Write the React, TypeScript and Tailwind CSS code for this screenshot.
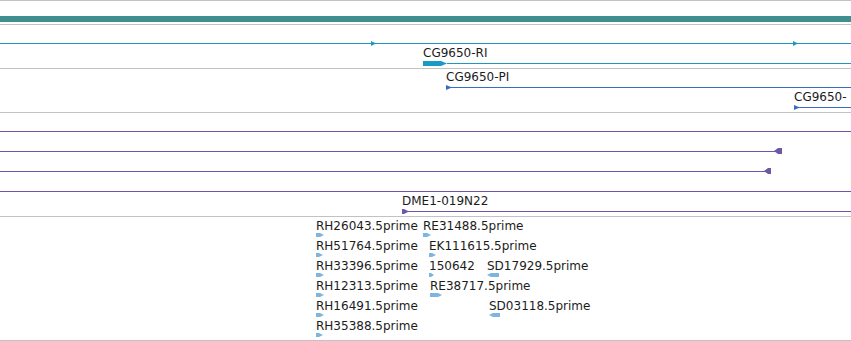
import type { ReactNode } from "react";

type Dir = "right" | "left";

// pennant arrowhead, flat back + pointed tip
function Glyph({ w, h, dir, fill, body = 0, mt = 0 }: { w: number; h: number; dir: Dir; fill: string; body?: number; mt?: number }) {
  const mid = h / 2;
  const pts =
    dir === "right"
      ? `0,0 ${body},0 ${w},${mid} ${body},${h} 0,${h}`
      : `${w},0 ${w - body},0 0,${mid} ${w - body},${h} ${w},${h}`;
  return (
    <svg style={{ marginTop: mt }} width={w} height={h} viewBox={`0 0 ${w} ${h}`} className="block shrink-0">
      <polygon points={pts} fill={fill} />
    </svg>
  );
}

// one feature at its genomic x: name on top, glyph under it
function Feature({ x, name, children }: { x: number; name?: string; children: ReactNode }) {
  return (
    <div className="absolute top-px flex flex-col items-start" style={{ left: x }}>
      <span className="h-[14px] whitespace-nowrap text-[12px] leading-[14px] text-[#1c1c1c] font-['DejaVu_Sans',sans-serif]">
        {name}
      </span>
      {children}
    </div>
  );
}

// connecting line of a feature, across the row at y 18
function Span({ from = 0, to, color }: { from?: number; to?: number; color: string }) {
  return (
    <div
      className={`absolute top-[18px] h-px ${color}`}
      style={to === undefined ? { left: from, right: 0 } : { left: from, width: to - from }}
    />
  );
}

const Row = ({ children }: { children?: ReactNode }) => <div className="relative h-5 shrink-0">{children}</div>;

const Sep = () => <div className="h-px shrink-0 bg-[#c2c2c2]" />;

const TEAL = "#1f98bf";
const BLUE = "#3a6cc6";
const PURPLE = "#6f57a6";
const EST = "#7db4e0";

const estRows: { x: number; name: string; w: number; dir: Dir }[][] = [
  [
    { x: 316, name: "RH26043.5prime", w: 8, dir: "right" },
    { x: 423, name: "RE31488.5prime", w: 8, dir: "right" },
  ],
  [
    { x: 316, name: "RH51764.5prime", w: 7, dir: "right" },
    { x: 429, name: "EK111615.5prime", w: 7, dir: "right" },
  ],
  [
    { x: 316, name: "RH33396.5prime", w: 8, dir: "right" },
    { x: 429, name: "150642", w: 5, dir: "right" },
    { x: 487, name: "SD17929.5prime", w: 12, dir: "left" },
  ],
  [
    { x: 316, name: "RH12313.5prime", w: 8, dir: "right" },
    { x: 430, name: "RE38717.5prime", w: 12, dir: "right" },
  ],
  [
    { x: 316, name: "RH16491.5prime", w: 8, dir: "right" },
    { x: 489, name: "SD03118.5prime", w: 11, dir: "left" },
  ],
  [{ x: 316, name: "RH35388.5prime", w: 7, dir: "right" }],
];

export default function App() {
  return (
    <div className="flex h-[341px] w-[851px] flex-col overflow-hidden bg-white">
      <Sep />
      <div className="flex h-[23px] flex-col justify-end pb-[2px]">
        <div className="h-[6px] bg-[#418e90]" />
      </div>
      <Sep />

      {/* transcripts */}
      <div className="flex h-[43px] flex-col">
        <Row>
          <Span color="bg-[#1f98bf]" />
          <Feature x={371}>
            <Glyph w={5} h={5} dir="right" fill={TEAL} mt={1} />
          </Feature>
          <Feature x={793}>
            <Glyph w={5} h={5} dir="right" fill={TEAL} mt={1} />
          </Feature>
        </Row>
        <Row>
          <Span from={447} color="bg-[#1f98bf]" />
          <Feature x={423} name="CG9650-RI">
            <Glyph w={24} h={5} dir="right" body={18} fill="#1a9bc2" mt={1} />
          </Feature>
        </Row>
      </div>
      <Sep />

      {/* proteins */}
      <div className="flex h-[43px] flex-col">
        <Row>
          <Span from={448} color="bg-[#3a6cc6]" />
          <Feature x={446} name="CG9650-PI">
            <Glyph w={6} h={5} dir="right" fill={BLUE} mt={1} />
          </Feature>
        </Row>
        <Row>
          <Span from={797} color="bg-[#3a6cc6]" />
          <Feature x={794} name="CG9650-">
            <Glyph w={6} h={5} dir="right" fill={BLUE} mt={1} />
          </Feature>
        </Row>
      </div>
      <Sep />

      {/* clones */}
      <div className="flex h-[103px] flex-col">
        <Row>
          <Span color="bg-[#6f57a6]" />
        </Row>
        <Row>
          <Span to={776} color="bg-[#6f57a6]" />
          <Feature x={774}>
            <Glyph w={8} h={6} dir="left" body={4} fill={PURPLE} />
          </Feature>
        </Row>
        <Row>
          <Span to={766} color="bg-[#6f57a6]" />
          <Feature x={764}>
            <Glyph w={7} h={6} dir="left" body={3} fill={PURPLE} />
          </Feature>
        </Row>
        <Row>
          <Span color="bg-[#6f57a6]" />
        </Row>
        <Row>
          <Span from={405} color="bg-[#6f57a6]" />
          <Feature x={402} name="DME1-019N22">
            <Glyph w={7} h={5} dir="right" body={2} fill={PURPLE} mt={1} />
          </Feature>
        </Row>
      </div>
      <Sep />

      {/* ESTs */}
      <div className="flex h-[123px] flex-col pt-px">
        {estRows.map((row, i) => (
          <Row key={i}>
            {row.map((e) => (
              <Feature key={e.name} x={e.x} name={e.name}>
                <Glyph w={e.w} h={4} dir={e.dir} body={Math.max(e.w - 4, 2)} fill={EST} />
              </Feature>
            ))}
          </Row>
        ))}
      </div>
      <Sep />
    </div>
  );
}
